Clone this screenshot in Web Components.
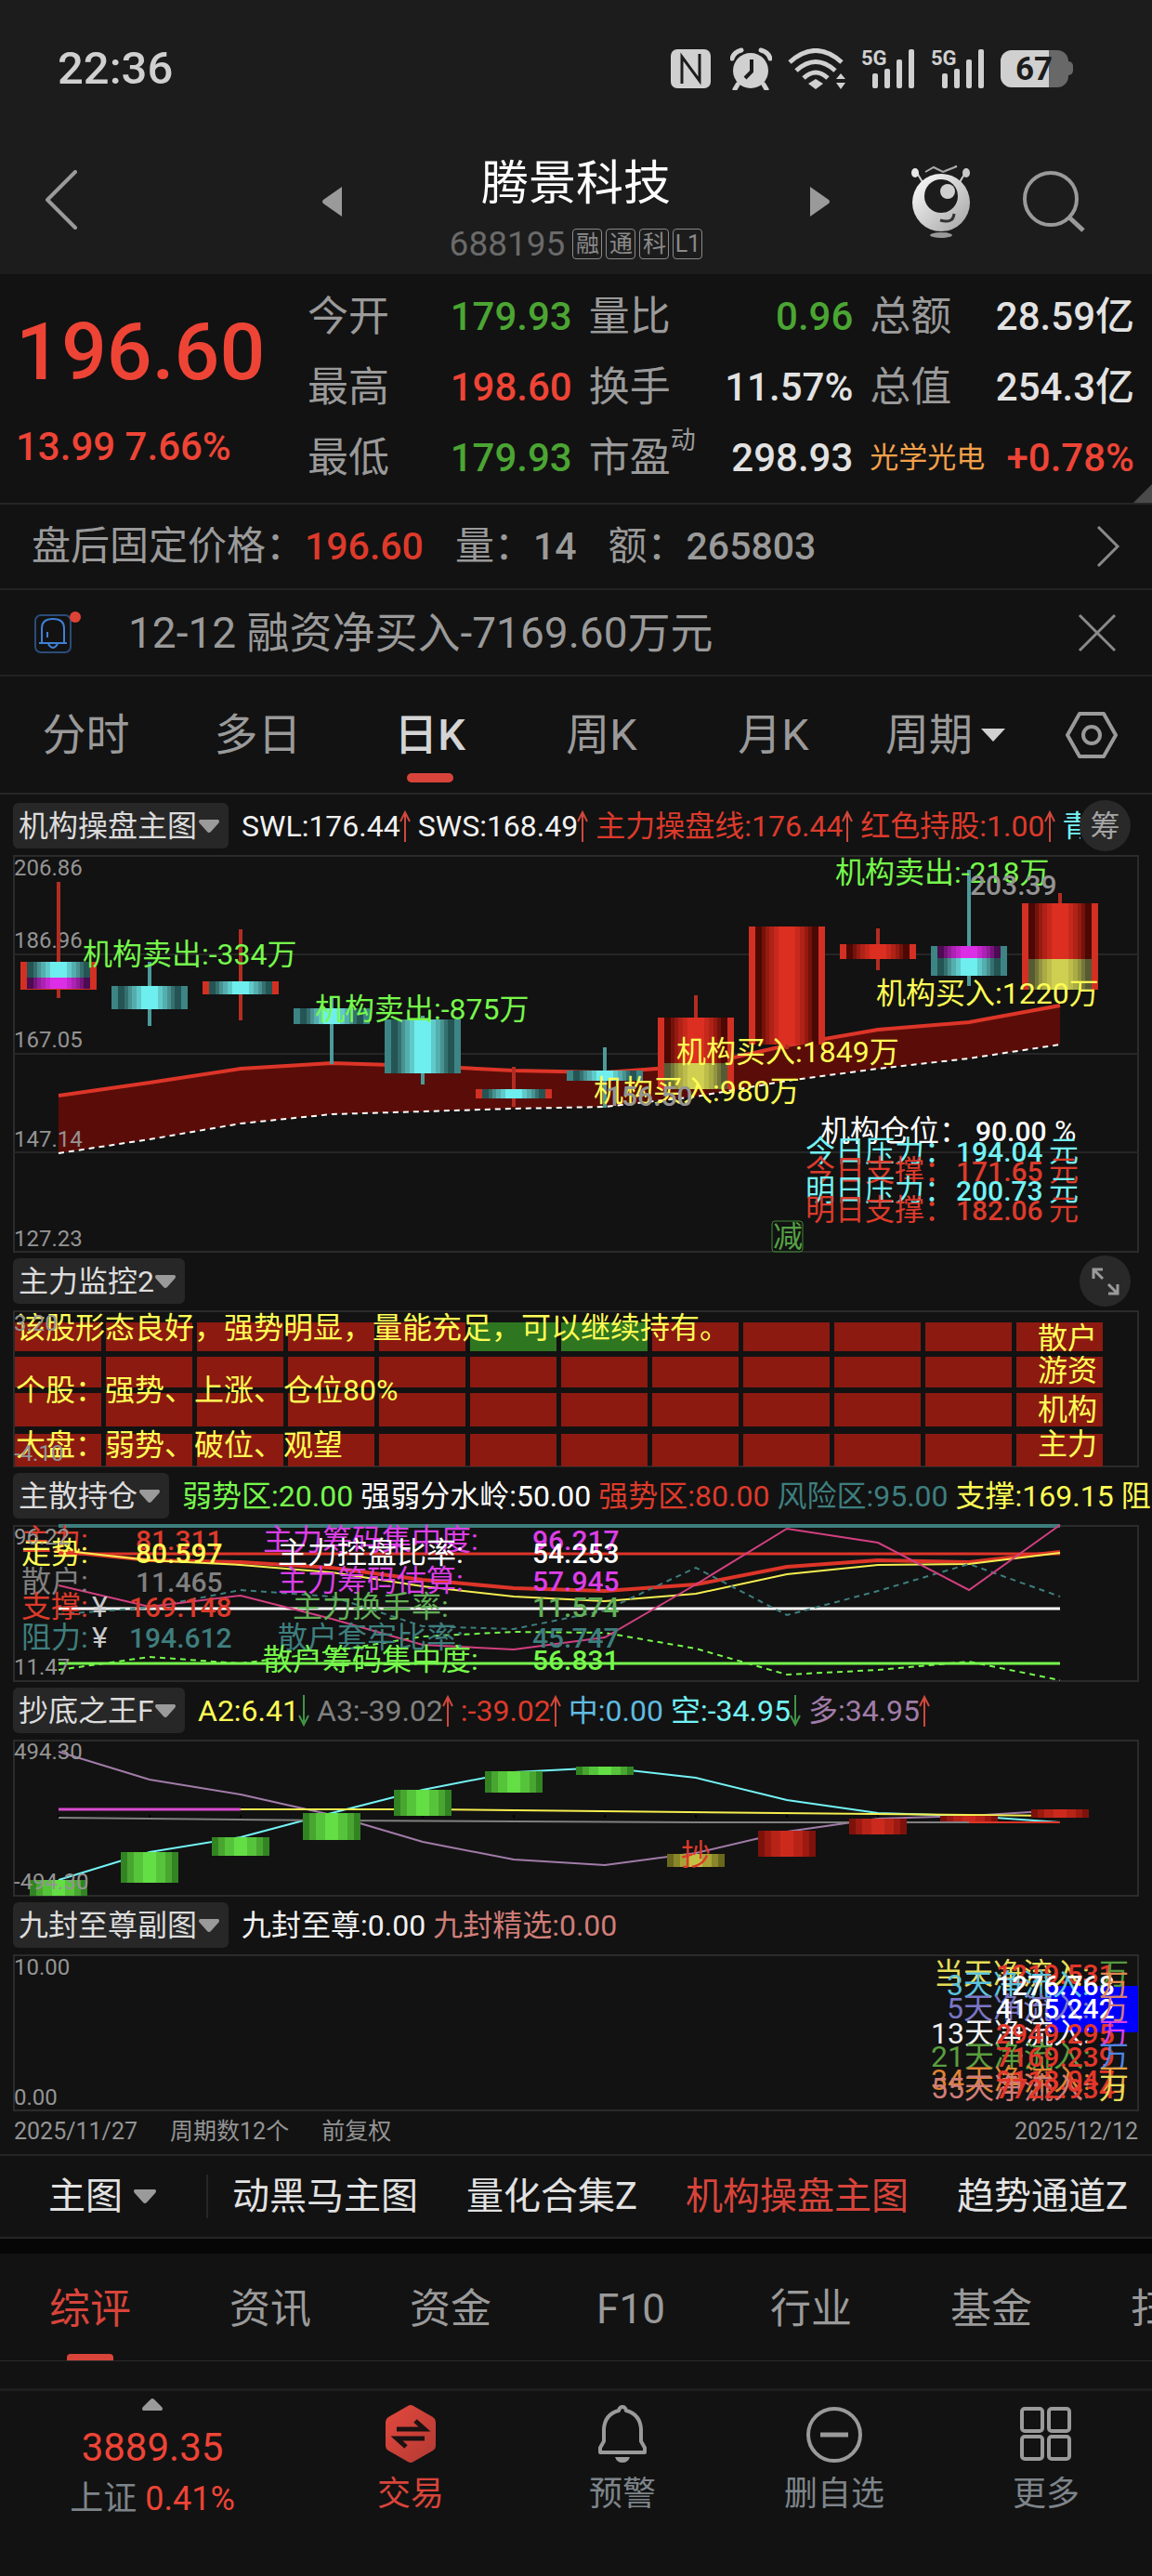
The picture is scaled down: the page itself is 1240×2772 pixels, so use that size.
<!DOCTYPE html>
<html lang="zh-CN">
<head>
<meta charset="utf-8">
<meta name="viewport" content="width=device-width, initial-scale=1">
<title>腾景科技 688195</title>
<style>
    html, body {
        margin: 0;
        background: #121212;
    }
    body {
        color: #e2e2e2;
        font-family: Roboto, "Noto Sans CJK SC", sans-serif;
        overflow-x: hidden;
    }
    main {
        display: block;
    }
</style>
</head>
<body>
<status-bar></status-bar>
<stock-header code="688195">腾景科技</stock-header>
<main>
    <quote-board></quote-board>
    <after-hours></after-hours>
    <news-alert>12-12 融资净买入-7169.60万元</news-alert>
    <period-tabs></period-tabs>

    <chart-panel name="机构操盘主图" class="first">
        <legend-item slot="legend" color="#f2f2f2" arrow="up">SWL:176.44</legend-item>
        <legend-item slot="legend" color="#f2f2f2" arrow="up">SWS:168.49</legend-item>
        <legend-item slot="legend" color="#dd3a2b" arrow="up">主力操盘线:176.44</legend-item>
        <legend-item slot="legend" color="#dd3a2b" arrow="up">红色持股:1.00</legend-item>
        <legend-item slot="legend" color="#74f3f5">青</legend-item>
        <round-button slot="action" label="筹码">筹</round-button>
        <candle-chart></candle-chart>
    </chart-panel>

    <chart-panel name="主力监控2">
        <round-button slot="action" label="展开">
            <svg width="30" height="30" viewBox="0 0 30 30" fill="none" stroke="#9a9a9a" stroke-width="3">
                <path d="M2 12V2H12M2 2L12 12M28 18V28H18M28 28L18 18"/>
            </svg>
        </round-button>
        <monitor-chart></monitor-chart>
    </chart-panel>

    <chart-panel name="主散持仓">
        <legend-item slot="legend" color="#76f94c">弱势区:20.00</legend-item>
        <legend-item slot="legend" color="#ffffff">强弱分水岭:50.00</legend-item>
        <legend-item slot="legend" color="#dd3a2b">强势区:80.00</legend-item>
        <legend-item slot="legend" color="#3e7e7e">风险区:95.00</legend-item>
        <legend-item slot="legend" color="#fffd55">支撑:169.15</legend-item>
        <legend-item slot="legend" color="#fffd55">阻</legend-item>
        <position-chart></position-chart>
    </chart-panel>

    <chart-panel name="抄底之王F">
        <legend-item slot="legend" color="#fffd55" arrow="down">A2:6.41</legend-item>
        <legend-item slot="legend" color="#808080" arrow="up">A3:-39.02</legend-item>
        <legend-item slot="legend" color="#dd3a2b" arrow="up">:-39.02</legend-item>
        <legend-item slot="legend" color="#5fbbe0">中:0.00</legend-item>
        <legend-item slot="legend" color="#74f3f5" arrow="down">空:-34.95</legend-item>
        <legend-item slot="legend" color="#a17ca8" arrow="up">多:34.95</legend-item>
        <bottom-chart></bottom-chart>
    </chart-panel>

    <chart-panel name="九封至尊副图">
        <legend-item slot="legend" color="#f2f2f2">九封至尊:0.00</legend-item>
        <legend-item slot="legend" color="#d07d78">九封精选:0.00</legend-item>
        <flow-chart></flow-chart>
    </chart-panel>

    <chart-footer></chart-footer>
    <indicator-bar></indicator-bar>
    <info-tabs></info-tabs>
</main>
<bottom-nav></bottom-nav>

<script>
// small base: every element clones its own template once
class BaseElement extends HTMLElement {
    constructor() {
        super();
        this._root = this.attachShadow({mode: 'open'});
    }

    connectedCallback() {
        const template = document.createElement('template');
        template.innerHTML = this.render();
        this._root.replaceChildren(template.content.cloneNode(true));
    }
}

const RESET = `
    :host, * { box-sizing: border-box; }
    button, select {
        margin: 0;
        padding: 0;
        border: 0;
        background: none;
        color: inherit;
        font: inherit;
    }
    svg { display: block; flex: none; }
`;

class StatusBar extends BaseElement {
    signal() {
        return `
            <svg width="58" height="46" viewBox="0 0 58 46" fill="#d0d0d0">
                <text x="0" y="19" font-size="22" font-weight="700">5G</text>
                <rect x="12" y="28" width="6" height="16" rx="2"/>
                <rect x="25" y="23" width="6" height="21" rx="2"/>
                <rect x="38" y="13" width="6" height="31" rx="2"/>
                <rect x="51" y="2" width="6" height="42" rx="2"/>
            </svg>`;
    }

    render() {
        return `
            <style>
                ${RESET}
                :host {
                    display: flex;
                    justify-content: space-between;
                    align-items: center;
                    height: 147px;
                    padding: 0 85px 0 62px;
                    background: #1c1c1c;
                    color: #d0d0d0;
                }
                time { font-size: 49px; font-weight: 500; line-height: 56px; }
                .icons { display: flex; align-items: center; gap: 17px; }
                .icons svg:first-child { margin-right: 4px; }
            </style>
            <time>22:36</time>
            <div class="icons">
                <svg width="43" height="44" viewBox="0 0 43 44">
                    <rect y="1" width="43" height="42" rx="7" fill="#d0d0d0"/>
                    <path d="M12 38V9L31 35V6" fill="none" stroke="#1c1c1c" stroke-width="3"/>
                </svg>
                <svg width="45" height="46" viewBox="0 0 45 46">
                    <circle cx="22" cy="25" r="19" fill="#d0d0d0"/>
                    <path d="M8 40L5 45M36 40L39 45M2 12Q4 5 12 3M43 12Q41 5 33 3" stroke="#d0d0d0" stroke-width="5" stroke-linecap="round" fill="none"/>
                    <path d="M23 13V26L16 33" stroke="#1c1c1c" stroke-width="4" fill="none"/>
                </svg>
                <svg width="62" height="44" viewBox="0 0 62 44" fill="none" stroke="#d0d0d0" stroke-width="5">
                    <path d="M2 15Q30 -10 58 15M9 24Q30 5 51 24M17 32Q30 20 43 32"/>
                    <path d="M30 33L38 38L30 44L22 38ZM57 27L62 33H52ZM57 44L62 37H52Z" fill="#d0d0d0" stroke="none"/>
                </svg>
                ${this.signal()}
                ${this.signal()}
                <svg width="78" height="42" viewBox="0 0 78 42">
                    <rect x="68" y="13" width="10" height="15" rx="5" fill="#686868"/>
                    <rect y="1" width="73" height="40" rx="12" fill="#686868"/>
                    <path d="M12 1H52V41H12A12 12 0 0 1 0 29V13A12 12 0 0 1 12 1Z" fill="#d0d0d0"/>
                    <text x="16" y="33" font-size="35" font-weight="700" fill="#1c1c1c">67</text>
                </svg>
            </div>
        `;
    }
}

class StockHeader extends BaseElement {
    render() {
        const tags = ['融', '通', '科', 'L1'].map(t => `<span class="tag">${t}</span>`).join('');
        return `
            <style>
                ${RESET}
                :host {
                    display: grid;
                    grid-template-columns: 1fr 44% 1fr;
                    align-items: center;
                    height: 148px;
                    padding-bottom: 8px;
                    background: #1c1c1c;
                }
                .left { padding-left: 48px; }
                .middle, .right { display: flex; align-items: center; }
                .middle { justify-content: space-between; }
                .right { justify-content: flex-end; gap: 56px; padding-right: 72px; }
                .title { padding-top: 10px; text-align: center; }
                h1 { margin: 0 0 16px; color: #fff; font-size: 51px; font-weight: 400; line-height: 64px; }
                .code {
                    display: flex;
                    align-items: center;
                    justify-content: center;
                    gap: 4px;
                    height: 33px;
                    color: #6a6a6a;
                    font-size: 37px;
                    line-height: 33px;
                }
                .number { margin-right: 4px; }
                .tag {
                    width: 32px;
                    height: 33px;
                    border: 1px solid #8a8a8a;
                    border-radius: 4px;
                    color: #8a8a8a;
                    font-size: 25px;
                    line-height: 31px;
                    text-align: center;
                }
            </style>
            <div class="left">
                <button aria-label="返回">
                    <svg width="36" height="64" viewBox="0 0 36 64" fill="none" stroke="#9a9a9a" stroke-width="4" stroke-linejoin="round" stroke-linecap="round"><path d="M33 2L3 32L33 62"/></svg>
                </button>
            </div>
            <div class="middle">
                <button aria-label="上一只"><svg width="22" height="32" viewBox="0 0 22 32"><path d="M21 0V32L1 18Q-1 16 1 14Z" fill="#9a9a9a"/></svg></button>
                <div class="title">
                    <h1><slot></slot></h1>
                    <div class="code"><span class="number">${this.getAttribute('code')}</span>${tags}</div>
                </div>
                <button aria-label="下一只"><svg width="22" height="32" viewBox="0 0 22 32"><path d="M1 0V32L21 18Q23 16 21 14Z" fill="#9a9a9a"/></svg></button>
            </div>
            <div class="right">
                <button aria-label="智能助手">
                    <svg width="64" height="78" viewBox="0 0 64 78">
                        <defs>
                            <linearGradient id="body" x1="0" y1="0" x2="1" y2="1">
                                <stop offset="0" stop-color="#fff"/><stop offset="1" stop-color="#a2a2a2"/>
                            </linearGradient>
                        </defs>
                        <path d="M6 8L12 18M58 8L52 18" stroke="#ccc" stroke-width="2"/>
                        <ellipse cx="4" cy="8" rx="4" ry="5" fill="#e8e8e8"/><ellipse cx="59" cy="8" rx="4" ry="5" fill="#c8c8c8"/>
                        <path d="M15 7L24 2L34 7L49 1L36 6" fill="none" stroke="#aaa" stroke-width="2"/>
                        <circle cx="32" cy="40" r="31" fill="url(#body)"/>
                        <ellipse cx="32" cy="33" rx="18" ry="18" fill="#1c1c1c"/>
                        <ellipse cx="39" cy="28" rx="8" ry="8" fill="#d0d0d0"/>
                        <path d="M31 59Q45 63 46 52" fill="none" stroke="#333" stroke-width="3"/>
                        <ellipse cx="32" cy="75" rx="12" ry="3" fill="#999"/>
                    </svg>
                </button>
                <button aria-label="搜索">
                    <svg width="67" height="66" viewBox="0 0 67 66" fill="none" stroke="#9a9a9a" stroke-width="4"><circle cx="30" cy="30" r="28"/><path d="M50 50L65 64" stroke-width="5"/></svg>
                </button>
            </div>
        `;
    }
}

class QuoteBoard extends BaseElement {
    group(rows) {
        return '<dl>' + rows.map(([name, value, tone, extra]) => `
            <div><dt class="${extra || ''}">${name}</dt><dd class="${tone}">${value}</dd></div>`).join('') + '</dl>';
    }

    render() {
        return `
            <style>
                ${RESET}
                :host {
                    position: relative;
                    display: flex;
                    gap: 18px;
                    height: 248px;
                    padding: 8px 19px 0 17px;
                    border-bottom: 2px solid #262626;
                }
                .price { flex: 0 0 296px; padding-top: 16px; color: #ee4436; }
                .last { font-size: 86px; font-weight: 500; line-height: 120px; }
                .change { font-size: 42px; font-weight: 500; line-height: 84px; }
                dl { flex: 1; margin: 0; }
                dl div { display: flex; justify-content: space-between; align-items: center; height: 76px; white-space: nowrap; }
                dt { display: flex; color: #9a9a9a; font-size: 44px; line-height: 60px; }
                dt.sector { color: #f2a04a; font-size: 31px; }
                dd { margin: 0; font-size: 42px; font-weight: 500; line-height: 60px; }
                small { font-size: 27px; line-height: 22px; }
                .up { color: #ee4436; }
                .down { color: #4ba533; }
                .flat { color: #e2e2e2; }
                .corner { position: absolute; right: 0; bottom: 0; }
            </style>
            <div class="price">
                <div class="last">196.60</div>
                <div class="change">13.99 7.66%</div>
            </div>
            ${this.group([['今开', '179.93', 'down'], ['最高', '198.60', 'up'], ['最低', '179.93', 'down']])}
            ${this.group([['量比', '0.96', 'down'], ['换手', '11.57%', 'flat'], ['市盈<small>动</small>', '298.93', 'flat']])}
            ${this.group([['总额', '28.59亿', 'flat'], ['总值', '254.3亿', 'flat'], ['光学光电', '+0.78%', 'up', 'sector']])}
            <svg class="corner" width="20" height="20" viewBox="0 0 20 20"><path d="M20 0V20H0Z" fill="#4a4a4a"/></svg>
        `;
    }
}

class AfterHours extends BaseElement {
    render() {
        return `
            <style>
                ${RESET}
                :host {
                    display: flex;
                    align-items: center;
                    height: 92px;
                    padding: 0 34px;
                    border-bottom: 2px solid #222;
                    color: #9a9a9a;
                    font-size: 42px;
                    line-height: 60px;
                    white-space: nowrap;
                }
                b { margin-right: 34px; font-size: 41px; font-weight: 500; }
                .up { color: #dd3a2b; }
                button { margin-left: auto; }
            </style>
            <span>盘后固定价格：</span><b class="up">196.60</b>
            <span>量：</span><b>14</b>
            <span>额：</span><b>265803</b>
            <button aria-label="查看盘后交易">
                <svg width="26" height="44" viewBox="0 0 26 44" fill="none" stroke="#8a8a8a" stroke-width="3"><path d="M2 1L23 22L2 43"/></svg>
            </button>
        `;
    }
}

class NewsAlert extends BaseElement {
    render() {
        return `
            <style>
                ${RESET}
                :host {
                    display: flex;
                    align-items: center;
                    height: 93px;
                    padding: 0 38px 0 36px;
                    border-bottom: 2px solid #222;
                    color: #9a9a9a;
                    font-size: 46px;
                    line-height: 60px;
                    white-space: nowrap;
                }
                .text { margin-left: 50px; }
                button { margin-left: auto; }
            </style>
            <svg width="52" height="46" viewBox="0 0 52 46" fill="none" stroke="#3f7fd6">
                <rect x="2" y="4" width="38" height="40" rx="6" stroke="#2b4c7a" stroke-width="2"/>
                <path d="M9 33V18Q9 8 21 8Q33 8 33 18V33M6 34H36M15 22V28" stroke-width="2"/>
                <path d="M16 35Q21 43 26 35" stroke-width="2"/>
                <circle cx="45" cy="6" r="6" fill="#dd4436" stroke="none"/>
            </svg>
            <span class="text"><slot></slot></span>
            <button aria-label="关闭">
                <svg width="42" height="42" viewBox="0 0 42 42" stroke="#8a8a8a" stroke-width="3"><path d="M2 2L40 40M40 2L2 40"/></svg>
            </button>
        `;
    }
}

class PeriodTabs extends BaseElement {
    render() {
        const tabs = ['分时', '多日', '日K', '周K', '月K'].map(t =>
            `<button role="tab" aria-selected="${t === '日K'}">${t}</button>`).join('');
        return `
            <style>
                ${RESET}
                :host {
                    display: flex;
                    height: 127px;
                    border-bottom: 2px solid #262626;
                    color: #9a9a9a;
                    font-size: 47px;
                    line-height: 60px;
                }
                button {
                    display: flex;
                    flex: 185 1 0;
                    align-items: center;
                    justify-content: center;
                    position: relative;
                }
                button:last-child { flex-grow: 130; }
                button[aria-selected="true"] { color: #d4d4d4; font-weight: 500; }
                button[aria-selected="true"]::after {
                    content: "";
                    position: absolute;
                    bottom: 11px;
                    width: 50px;
                    height: 10px;
                    border-radius: 5px;
                    background: #d9443a;
                }
                button svg { margin-left: 9px; }
                button:last-child svg { margin: 0; }
            </style>
            ${tabs}
            <button aria-haspopup="menu">周期<svg width="26" height="14" viewBox="0 0 26 14"><path d="M0 0H26L13 14Z" fill="#d0d0d0"/></svg></button>
            <button aria-label="设置">
                <svg width="56" height="50" viewBox="0 0 56 50" fill="none" stroke="#9a9a9a" stroke-width="4">
                    <path d="M15 2H41L54 25L41 48H15L2 25Z" stroke-linejoin="round"/><circle cx="28" cy="25" r="9"/>
                </svg>
            </button>
        `;
    }
}

class LegendItem extends BaseElement {
    render() {
        const arrow = this.getAttribute('arrow');
        const head = arrow === 'up' ? 'M6 34V2M1 12L6 2L11 12' : 'M6 0V32M1 22L6 32L11 22';
        return `
            <style>
                :host { display: flex; align-items: center; flex: none; color: ${this.getAttribute('color')}; }
                svg { display: block; margin-left: -1px; }
            </style>
            <slot></slot>
            ${arrow ? `<svg width="12" height="34" viewBox="0 0 12 34" fill="none" stroke="${arrow === 'up' ? '#d0483c' : '#429447'}" stroke-width="2"><path d="${head}"/></svg>` : ''}
        `;
    }
}

class RoundButton extends BaseElement {
    render() {
        return `
            <style>
                ${RESET}
                :host { display: block; }
                button {
                    display: grid;
                    place-items: center;
                    width: 55px;
                    height: 55px;
                    border-radius: 50%;
                    background: #292929;
                    color: #a5a5a5;
                    font-size: 32px;
                    line-height: 40px;
                }
            </style>
            <button aria-label="${this.getAttribute('label')}"><slot></slot></button>
        `;
    }
}

class ChartPanel extends BaseElement {
    render() {
        const name = this.getAttribute('name');
        return `
            <style>
                ${RESET}
                :host { display: block; padding-left: 14px; }
                :host(.first) { padding-top: 2px; }
                header {
                    position: relative;
                    display: flex;
                    align-items: center;
                    gap: 14px;
                    height: 63px;
                    font-size: 32px;
                    line-height: 48px;
                    white-space: nowrap;
                }
                .picker { display: flex; align-items: center; position: relative; flex: none; border-radius: 6px; background: #272727; }
                select {
                    height: 49px;
                    padding: 0 33px 0 6px;
                    appearance: none;
                    color: #dcdcdc;
                }
                .picker svg { position: absolute; right: 10px; pointer-events: none; }
                .legend { display: flex; flex: 1; gap: 8px; overflow: hidden; min-width: 0; }
                :host(.first) .legend { margin-right: 77px; }
                .action { position: absolute; right: 23px; }
                .plot { margin-right: 14px; }
            </style>
            <header>
                <span class="picker">
                    <select aria-label="指标"><option>${name}</option></select>
                    <svg width="22" height="14" viewBox="0 0 22 14"><path d="M1 0H21Q23 2 21 4L13 13Q11 15 9 13L1 4Q-1 2 1 0Z" fill="#9a9a9a"/></svg>
                </span>
                <div class="legend"><slot name="legend"></slot></div>
                <div class="action"><slot name="action"></slot></div>
            </header>
            <div class="plot"><slot></slot></div>
        `;
    }
}

const STEP = 98;   // distance between two periods
const LEFT = 49;   // centre of the first period

const SHADES = {
    cyan: ['#245454', '#35706f', '#489291', '#55aeae', '#60caca', '#6eeeee'],
    red: ['#4c0803', '#74120b', '#951a11', '#b02217', '#c7281c', '#dc2f21'],
    magenta: ['#4d0b52', '#741579', '#931c9a', '#ac22b4', '#c428cd', '#dc2ee6'],
    yellow: ['#575b34', '#757738', '#93943f', '#aaab45', '#bcbd4a', '#cfd052'],
};
const EDGE = {cyan: '#3d8585', red: '#d23023'};
const WIDTHS = [68, 54, 46, 38, 28, 18];

class BaseChart extends BaseElement {
    x(i) {
        return LEFT + STEP * i;
    }

    line(ys, color, width, dash) {
        const points = ys.map((y, i) => `${this.x(i)},${y}`).join(' ');
        return `<polyline points="${points}" fill="none" stroke="${color}" stroke-width="${width || 2}"${dash ? ` stroke-dasharray="${dash}"` : ''}/>`;
    }

    text(x, y, value, color) {
        return `<text x="${x}" y="${y}" fill="${color}">${value}</text>`;
    }

    number(x, y, value, color) {
        return `<text class="number" x="${x}" y="${y}" fill="${color}">${value}</text>`;
    }

    axis(y, value) {
        return `<text class="axis" x="1" y="${y}">${value}</text>`;
    }

    frame(height, content) {
        return `
            <style>
                :host { display: block; }
                svg { display: block; width: 100%; height: auto; overflow: visible; }
                text { font-size: 32px; }
                .number { font-size: 30px; font-weight: 500; }
                .axis { fill: #949494; font-size: 24px; }
            </style>
            <svg viewBox="0 0 1212 ${height}">
                <rect x="1" y="1" width="1210" height="${height - 1}" fill="none" stroke="#2b2b2b" stroke-width="2"/>
                ${content}
            </svg>
        `;
    }
}

class CandleChart extends BaseChart {
    core(i, top, bottom, shade) {
        return WIDTHS.map((w, n) =>
            `<rect x="${this.x(i) - w / 2}" y="${top}" width="${w}" height="${bottom - top}" fill="${SHADES[shade][n]}"/>`).join('');
    }

    candle([edge, high, low, top, bottom, parts], i) {
        const x = this.x(i);
        return `
            <rect x="${x - 2}" y="${high}" width="4" height="${low - high}" fill="${edge === 'red' ? '#b32c22' : '#4c9a9a'}"/>
            <rect x="${x - 41}" y="${top}" width="82" height="${bottom - top}" fill="${EDGE[edge]}"/>
            ${parts.map(([from, to, shade]) => this.core(i, from, to, shade)).join('')}
        `;
    }

    render() {
        const upper = [259, 245, 230, 224, 227, 232, 234, 227, 205, 188, 180, 162];
        const lower = [321, 306, 289, 279, 276, 273, 271, 260, 243, 230, 219, 204];
        const band = upper.map((y, i) => `${this.x(i)},${y}`)
            .concat(lower.map((y, i) => `${this.x(i)},${y}`).reverse()).join(' ');
        // edge, high, low, body top, body bottom, filled parts
        const candles = [
            ['red', 29, 154, 115, 145, [[115, 132, 'cyan'], [132, 144, 'magenta']]],
            ['cyan', 115, 184, 141, 166, [[141, 166, 'cyan']]],
            ['red', 80, 178, 136, 150, [[136, 150, 'cyan']]],
            ['cyan', 152, 225, 165, 182, [[165, 182, 'cyan']]],
            ['cyan', 173, 247, 177, 235, [[177, 235, 'cyan']]],
            ['red', 228, 271, 252, 262, [[252, 262, 'cyan']]],
            ['cyan', 207, 272, 232, 243, [[232, 243, 'cyan']]],
            ['red', 151, 252, 175, 252, [[175, 224, 'red'], [224, 252, 'yellow']]],
            ['red', 77, 209, 77, 204, [[77, 204, 'red']]],
            ['red', 79, 124, 96, 112, [[96, 112, 'red']]],
            ['cyan', 16, 141, 98, 130, [[98, 111, 'magenta'], [111, 130, 'cyan']]],
            ['red', 41, 145, 52, 145, [[52, 112, 'red'], [112, 145, 'yellow']]],
        ];
        const levels = [
            ['今日压力：', '194.04', 330, '#74f3f5'],
            ['今日支撑：', '171.65', 351, '#dd3a2b'],
            ['明日压力：', '200.73', 372, '#74f3f5'],
            ['明日支撑：', '182.06', 393, '#dd3a2b'],
        ];
        return this.frame(427, `
            <path d="M1 107H1211M1 214H1211M1 320H1211" stroke="#262626" stroke-width="2"/>
            <polygon points="${band}" fill="#5a0d08"/>
            ${this.line(upper, '#dd3528', 4)}
            ${this.line(lower, '#ffffff', 2, '6 5')}
            ${this.axis(22, '206.86')}${this.axis(100, '186.96')}${this.axis(207, '167.05')}${this.axis(314, '147.14')}${this.axis(421, '127.23')}
            ${candles.map((c, i) => this.candle(c, i)).join('')}
            ${this.text(75, 118, '机构卖出:-334万', '#76f94c')}
            ${this.text(325, 177, '机构卖出:-875万', '#76f94c')}
            ${this.text(885, 30, '机构卖出:-218万', '#76f94c')}
            ${this.text(929, 160, '机构买入:1220万', '#fffd55')}
            ${this.text(714, 223, '机构买入:1849万', '#fffd55')}
            ${this.text(625, 265, '机构买入:980万', '#fffd55')}
            ${this.number(1030, 43, '203.39', '#949494')}
            ${this.number(638, 270, '156.50', '#949494')}
            ${this.text(869, 308, '机构仓位：', '#ffffff')}
            ${this.number(1036, 308, '90.00', '#ffffff')}
            ${this.text(1121, 308, '%', '#ffffff')}
            ${levels.map(([name, value, y, color]) =>
                this.text(853, y, name, color) + this.number(1015, y, value, color) + this.text(1115, y, '元', color)).join('')}
            <rect x="817" y="394" width="33" height="33" rx="3" fill="none" stroke="#3d8a34" stroke-width="1"/>
            ${this.text(818, 422, '减', '#55a345')}
        `);
    }
}

class MonitorChart extends BaseChart {
    render() {
        const rows = [[13, 31], [50, 33], [89, 36], [133, 35]];
        let cells = '';
        rows.forEach(([y, h], r) => {
            for (let i = 0; i < 12; i++) {
                const color = r === 0 && (i === 5 || i === 6) ? '#2f7620' : '#8c1a11';
                cells += `<rect x="${2 + STEP * i}" y="${y}" width="93" height="${h}" fill="${color}"/>`;
            }
        });
        return this.frame(168, `
            ${cells}
            ${this.text(3, 30, '该股形态良好，强势明显，量能充足，可以继续持有。', '#fffd55')}
            ${this.text(3, 97, '个股：强势、上涨、仓位80%', '#fffd55')}
            ${this.text(3, 156, '大盘：弱势、破位、观望', '#fffd55')}
            ${this.text(1103, 41, '散户', '#fffd55')}
            ${this.text(1103, 76, '游资', '#fffd55')}
            ${this.text(1103, 118, '机构', '#fffd55')}
            ${this.text(1103, 155, '主力', '#fffd55')}
            ${this.axis(22, '3.20')}${this.axis(162, '-4.10')}
        `);
    }
}

class PositionChart extends BaseChart {
    level(y, color, width) {
        return `<path d="M49 ${y}H1127" stroke="${color}" stroke-width="${width}"/>`;
    }

    render() {
        const left = [
            ['主力:', '', '81.311', 27, '#dd3a2b'],
            ['走势:', '', '80.597', 41, '#fffd55'],
            ['散户:', '', '11.465', 72, '#808080'],
            ['支撑:', '¥', '169.148', 99, '#dd3a2b'],
            ['阻力:', '¥', '194.612', 132, '#3e7e7e'],
        ];
        const right = [
            [269, '主力筹码集中度:', '96.217', 27, '#dc3ee6'],
            [285, '主力控盘比率:', '54.253', 41, '#ffffff'],
            [285, '主力筹码估算:', '57.945', 71, '#dc3ee6'],
            [301, '主力换手率:', '11.574', 99, '#62b057'],
            [285, '散户套牢比率:', '45.747', 132, '#3e7e7e'],
            [269, '散户筹码集中度:', '56.831', 156, '#76f94c'],
        ];
        return this.frame(168, `
            ${this.level(1, '#3e7e7e', 4)}${this.level(31, '#dd3528', 3)}${this.level(90, '#ffffff', 3)}${this.level(149, '#76f94c', 3)}
            ${this.line([28, 38, 40, 46, 59, 68, 71, 64, 45, 38, 40, 29], '#dd3528', 4)}
            ${this.line([27, 38, 43, 51, 66, 77, 82, 74, 53, 43, 42, 30], '#f5ee50', 2)}
            ${this.line([96, 89, 70, 77, 109, 112, 92, 46, 97, 71, 42, 77], '#3e7e7e', 2, '6 5')}
            ${this.line([156, 142, 149, 136, 120, 115, 116, 133, 161, 156, 147, 167], '#76f94c', 2, '6 5')}
            ${this.line([65, 88, 76, 101, 129, 134, 121, 64, 4, 19, 70, 0], '#d23f80', 2)}
            ${left.map(([name, unit, value, y, color]) =>
                this.text(9, y, name, color) +
                (unit ? this.text(85, y, unit, '#c8c8c8') : '') +
                this.number(unit ? 125 : 132, y, value, color)).join('')}
            ${right.map(([x, name, value, y, color]) =>
                this.text(x, y, name, color) + this.number(559, y, value, color)).join('')}
            ${this.axis(21, '96.22')}${this.axis(161, '11.47')}
        `);
    }
}

class BottomChart extends BaseChart {
    render() {
        const tones = {
            green: ['#328423', '#48a630', '#56c43a', '#63de44'],
            olive: ['#6a681c', '#8a872a', '#a8a435', '#c4c242'],
            red: ['#7d120b', '#9c1a11', '#b82318', '#cd2a1e'],
        };
        const bars = [
            [151, 168, 'green'], [121, 154, 'green'], [105, 125, 'green'], [79, 108, 'green'],
            [54, 82, 'green'], [34, 57, 'green'], [29, 38, 'green'], [123, 137, 'olive'],
            [98, 126, 'red'], [85, 102, 'red'], [82, 88, 'red'], [75, 84, 'red'],
        ];
        return this.frame(168, `
            ${bars.map((b, i) => `<rect x="${this.x(i) - 1}" y="81" width="2" height="3" fill="#000"/>`).join('')}
            ${this.line([13, 43, 59, 81, 110, 129, 135, 122, 99, 85, 82, 76], '#a17ca8', 2)}
            ${this.line([151, 121, 105, 79, 54, 35, 30, 41, 65, 79, 82, 89], '#74f3f5', 2)}
            <path d="M49 75H245" stroke="#d94bd0" stroke-width="3"/>
            <path d="M245 75L441 75L1127 82" fill="none" stroke="#f5ee50" stroke-width="2"/>
            <path d="M49 84L343 87L735 89H1127" fill="none" stroke="#808080" stroke-width="2"/>
            <path d="M1029 89H1127" stroke="#dd3528" stroke-width="2"/>
            ${bars.map(([top, bottom, tone], i) => [62, 48, 34, 14].map((w, n) =>
                `<rect x="${this.x(i) - w / 2}" y="${top}" width="${w}" height="${bottom - top}" fill="${tones[tone][n]}"/>`).join('')).join('')}
            ${this.axis(21, '494.30')}${this.axis(161, '-494.30')}
            ${this.text(719, 135, '抄', '#dd3a2b')}
        `);
    }
}

class FlowChart extends BaseChart {
    render() {
        const red = '#e3372a';
        const rows = [
            [991, '当天净流入:', '1219.531', 32, '#e6de58', red, '#559a40'],
            [1005, '3天净流入:', '1276.768', 44, '#5cc2de', '#ffffff', '#e08a4c'],
            [1005, '5天净流入:', '4105.242', 69, '#7b76c6', '#ffffff', '#d07d78'],
            [988, '13天净流入:', '2949.295', 96, '#f2f2f2', red, '#d840e2'],
            [988, '21天净流入:', '7169.239', 121, '#5a9f3e', red, '#4d86e4'],
            [988, '34天净流入:', '9118.047', 146, '#e08434', red, '#eda23e'],
            [988, '55天净流入:', '7722.934', 155, '#d07d78', red, '#e6de58'],
        ];
        return this.frame(168, `
            <rect x="1113" y="34" width="98" height="50" fill="#0000fe"/>
            ${this.axis(22, '10.00')}${this.axis(162, '0.00')}
            ${rows.map(([x, name, value, y, c1, c2, c3]) =>
                this.text(x, y, name, c1) + this.number(1058, y, value, c2) + this.text(1169, y, '万', c3)).join('')}
        `);
    }
}

class ChartFooter extends BaseElement {
    render() {
        return `
            <style>
                ${RESET}
                :host {
                    display: flex;
                    gap: 35px;
                    height: 49px;
                    padding: 0 15px;
                    border-bottom: 2px solid #262626;
                    color: #949494;
                    font-size: 25px;
                    line-height: 46px;
                }
                .end { margin-left: auto; }
            </style>
            <time>2025/11/27</time><span>周期数12个</span><span>前复权</span><time class="end">2025/12/12</time>
        `;
    }
}

class IndicatorBar extends BaseElement {
    render() {
        const items = ['动黑马主图', '量化合集Z', '机构操盘主图', '趋势通道Z'].map(t =>
            `<button aria-pressed="${t === '机构操盘主图'}">${t}</button>`).join('');
        return `
            <style>
                ${RESET}
                :host {
                    display: flex;
                    align-items: center;
                    height: 89px;
                    padding-left: 52px;
                    border-bottom: 2px solid #262626;
                    font-size: 40px;
                    line-height: 60px;
                    white-space: nowrap;
                    overflow: hidden;
                }
                .picker { display: flex; align-items: center; position: relative; }
                select { padding-right: 36px; appearance: none; height: 60px; }
                .picker svg { position: absolute; right: 0; pointer-events: none; }
                .list {
                    display: flex;
                    gap: 52px;
                    align-items: center;
                    height: 47px;
                    margin-left: 54px;
                    padding-left: 26px;
                    border-left: 2px solid #262626;
                }
                button[aria-pressed="true"] { color: #d9443a; }
            </style>
            <span class="picker">
                <select aria-label="图表位置"><option>主图</option></select>
                <svg width="24" height="15" viewBox="0 0 24 15"><path d="M1 0H23Q25 2 23 4L14 14Q12 16 10 14L1 4Q-1 2 1 0Z" fill="#9a9a9a"/></svg>
            </span>
            <div class="list">${items}</div>
        `;
    }
}

class InfoTabs extends BaseElement {
    render() {
        const tabs = ['综评', '资讯', '资金', 'F10', '行业', '基金', '扫雷'].map((t, i) =>
            `<button role="tab" aria-selected="${i === 0}">${t}</button>`).join('');
        return `
            <style>
                ${RESET}
                :host {
                    display: flex;
                    height: 132px;
                    border-top: 16px solid #060606;
                    border-bottom: 1px solid #2b2b2b;
                    color: #9a9a9a;
                    font-size: 44px;
                    line-height: 60px;
                    overflow: hidden;
                }
                button { position: relative; flex: 0 0 194px; padding-top: 4px; }
                button[aria-selected="true"] { color: #d9443a; }
                button[aria-selected="true"]::after {
                    content: "";
                    position: absolute;
                    left: 72px;
                    bottom: 0;
                    width: 50px;
                    height: 7px;
                    border-radius: 4px 4px 0 0;
                    background: #d9443a;
                }
            </style>
            ${tabs}
        `;
    }
}

class BottomNav extends BaseElement {
    render() {
        return `
            <style>
                ${RESET}
                :host {
                    display: flex;
                    margin-top: 29px;
                    padding-bottom: 60px;
                    border-top: 3px solid #1e1e1e;
                    color: #7d848a;
                    font-size: 36px;
                    line-height: 48px;
                }
                button {
                    display: flex;
                    flex: 228 1 0;
                    flex-direction: column;
                    align-items: center;
                    padding-top: 14px;
                }
                button svg { margin-bottom: 9px; }
                .market { flex-grow: 328; padding-top: 8px; }
                .market svg { margin: 0; }
                .index { color: #ee4436; font-size: 42px; line-height: 80px; }
                .up { color: #ee4436; }
                .sub { line-height: 30px; }
                .hot { color: #d9443a; }
            </style>
            <button class="market">
                <svg width="22" height="13" viewBox="0 0 22 13"><path d="M1 13H21Q23 11 21 9L13 1Q11 -1 9 1L1 9Q-1 11 1 13Z" fill="#9a9a9a"/></svg>
                <span class="index">3889.35</span>
                <span class="sub">上证 <span class="up">0.41%</span></span>
            </button>
            <button class="hot">
                <svg width="56" height="64" viewBox="0 0 56 64">
                    <defs><linearGradient id="hex" x1="0" y1="0" x2="1" y2="1"><stop offset="0" stop-color="#e4483d"/><stop offset="1" stop-color="#b23a33"/></linearGradient></defs>
                    <path d="M25 2Q28 0 31 2L52 14Q55 16 55 19V45Q55 48 52 50L31 62Q28 64 25 62L4 50Q1 48 1 45V19Q1 16 4 14Z" fill="url(#hex)"/>
                    <path d="M13 27H43L33 18M43 37H13L23 46" fill="none" stroke="#1c1212" stroke-width="5"/>
                </svg>
                交易
            </button>
            <button>
                <svg width="52" height="64" viewBox="0 0 52 64" fill="none" stroke="#9a9a9a" stroke-width="4">
                    <path d="M26 3Q29 3 30 7Q45 11 46 27V40L50 47V52H2V47L6 40V27Q7 11 22 7Q23 3 26 3Z" stroke-linejoin="round"/>
                    <path d="M18 57H34Q32 63 26 63Q20 63 18 57Z" fill="#9a9a9a" stroke="none"/>
                </svg>
                预警
            </button>
            <button>
                <svg width="60" height="64" viewBox="0 0 60 64" fill="none" stroke="#9a9a9a" stroke-width="4"><circle cx="30" cy="33" r="28"/><path d="M15 33H45" stroke-width="5"/></svg>
                删自选
            </button>
            <button>
                <svg width="56" height="64" viewBox="0 0 56 64" fill="none" stroke="#9a9a9a" stroke-width="4">
                    <rect x="2" y="5" width="22" height="24" rx="3"/><rect x="31" y="5" width="22" height="24" rx="3"/>
                    <rect x="2" y="35" width="22" height="24" rx="3"/><rect x="31" y="35" width="22" height="24" rx="3"/>
                </svg>
                更多
            </button>
        `;
    }
}

customElements.define('status-bar', StatusBar);
customElements.define('stock-header', StockHeader);
customElements.define('quote-board', QuoteBoard);
customElements.define('after-hours', AfterHours);
customElements.define('news-alert', NewsAlert);
customElements.define('period-tabs', PeriodTabs);
customElements.define('legend-item', LegendItem);
customElements.define('round-button', RoundButton);
customElements.define('chart-panel', ChartPanel);
customElements.define('candle-chart', CandleChart);
customElements.define('monitor-chart', MonitorChart);
customElements.define('position-chart', PositionChart);
customElements.define('bottom-chart', BottomChart);
customElements.define('flow-chart', FlowChart);
customElements.define('chart-footer', ChartFooter);
customElements.define('indicator-bar', IndicatorBar);
customElements.define('info-tabs', InfoTabs);
customElements.define('bottom-nav', BottomNav);
</script>
</body>
</html>
